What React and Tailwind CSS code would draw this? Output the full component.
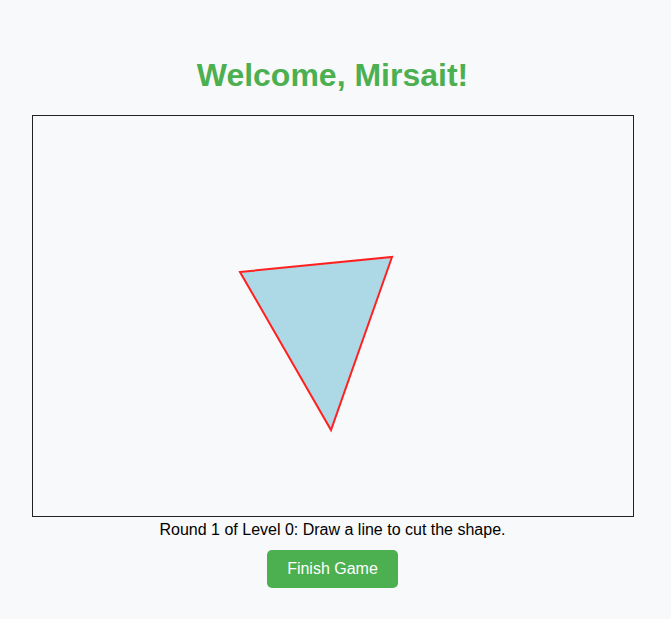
export default function App() {
  return (
    <div className="min-h-[619px] w-full bg-[#f8f9fa] font-['Liberation_Sans',Arial,sans-serif] text-black">
      <div className="flex flex-col items-center pr-[6px] pt-[57px]">
        <h1 className="text-[32px] font-bold leading-[37px] text-[#4caf50]">Welcome, Mirsait!</h1>
        <div className="mt-[21px] h-[402px] w-[602px] border border-[#222] bg-[#f8f9fa]">
          <svg width="600" height="400" viewBox="0 0 600 400" className="block">
            <polygon
              points="207,156 359,141 298,314"
              fill="#add8e6"
              stroke="#ff2020"
              strokeWidth="2"
              strokeLinejoin="miter"
            />
          </svg>
        </div>
        <p className="mt-[4px] text-[16px] leading-[18px]">Round 1 of Level 0: Draw a line to cut the shape.</p>
        <button className="mt-[11px] h-[38px] rounded-[5px] bg-[#4caf50] px-[20px] text-[16px] text-white">
          Finish Game
        </button>
      </div>
    </div>
  );
}
